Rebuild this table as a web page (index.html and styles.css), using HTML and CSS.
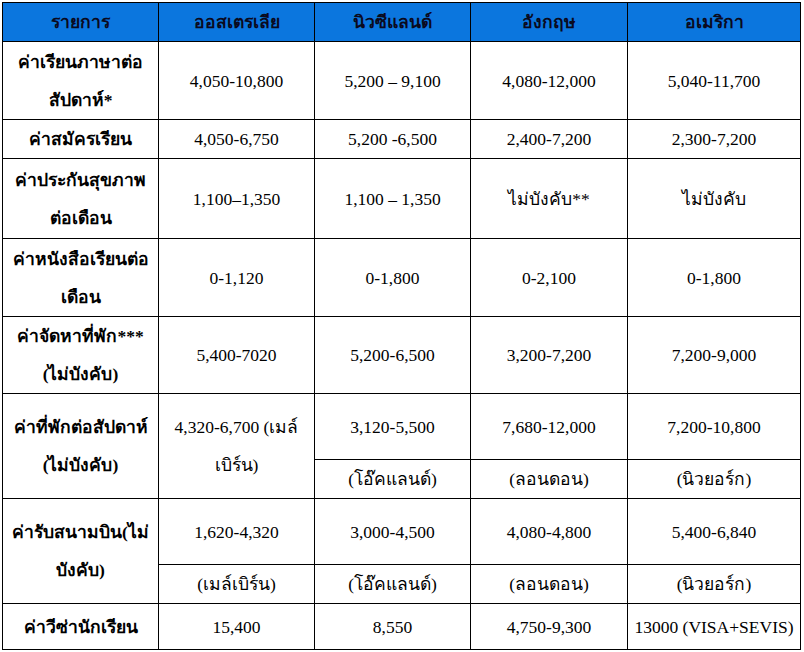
FILE: index.html
```html
<!DOCTYPE html>
<html lang="th">
<head>
<meta charset="utf-8">
<title>ค่าใช้จ่าย</title>
<link rel="stylesheet" href="styles.css">
</head>
<body>
<table class="costs">
  <colgroup>
    <col class="c1"><col class="c2"><col class="c3"><col class="c4"><col class="c5">
  </colgroup>
  <thead>
    <tr class="h-head">
      <th>รายการ</th>
      <th>ออสเตรเลีย</th>
      <th>นิวซีแลนด์</th>
      <th>อังกฤษ</th>
      <th>อเมริกา</th>
    </tr>
  </thead>
  <tbody>
    <tr class="h-78">
      <th>ค่าเรียนภาษาต่อ<br>สัปดาห์*</th>
      <td>4,050-10,800</td>
      <td>5,200 – 9,100</td>
      <td>4,080-12,000</td>
      <td>5,040-11,700</td>
    </tr>
    <tr class="h-38">
      <th>ค่าสมัครเรียน</th>
      <td>4,050-6,750</td>
      <td>5,200 -6,500</td>
      <td>2,400-7,200</td>
      <td>2,300-7,200</td>
    </tr>
    <tr class="h-80">
      <th>ค่าประกันสุขภาพ<br>ต่อเดือน</th>
      <td>1,100–1,350</td>
      <td>1,100 – 1,350</td>
      <td>ไม่บังคับ**</td>
      <td>ไม่บังคับ</td>
    </tr>
    <tr class="h-78">
      <th>ค่าหนังสือเรียนต่อ<br>เดือน</th>
      <td>0-1,120</td>
      <td>0-1,800</td>
      <td>0-2,100</td>
      <td>0-1,800</td>
    </tr>
    <tr class="h-77">
      <th>ค่าจัดหาที่พัก***<br>(ไม่บังคับ)</th>
      <td>5,400-7020</td>
      <td>5,200-6,500</td>
      <td>3,200-7,200</td>
      <td>7,200-9,000</td>
    </tr>
    <tr class="h-66">
      <th rowspan="2">ค่าที่พักต่อสัปดาห์<br>(ไม่บังคับ)</th>
      <td rowspan="2">4,320-6,700 (เมล์<br>เบิร์น)</td>
      <td>3,120-5,500</td>
      <td>7,680-12,000</td>
      <td>7,200-10,800</td>
    </tr>
    <tr class="h-39">
      <td>(โอ๊คแลนด์)</td>
      <td>(ลอนดอน)</td>
      <td>(นิวยอร์ก)</td>
    </tr>
    <tr class="h-66">
      <th rowspan="2">ค่ารับสนามบิน(ไม่<br>บังคับ)</th>
      <td>1,620-4,320</td>
      <td>3,000-4,500</td>
      <td>4,080-4,800</td>
      <td>5,400-6,840</td>
    </tr>
    <tr class="h-39">
      <td>(เมล์เบิร์น)</td>
      <td>(โอ๊คแลนด์)</td>
      <td>(ลอนดอน)</td>
      <td>(นิวยอร์ก)</td>
    </tr>
    <tr class="h-46">
      <th>ค่าวีซ่านักเรียน</th>
      <td>15,400</td>
      <td>8,550</td>
      <td>4,750-9,300</td>
      <td>13000 (VISA+SEVIS)</td>
    </tr>
  </tbody>
</table>
</body>
</html>
```

FILE: styles.css
```css
html, body {
  margin: 0;
  padding: 0;
  background: #ffffff;
}

body {
  padding: 2px 0 0 2px;
  font-family: "Liberation Serif", "Noto Sans", "DejaVu Sans", serif;
  color: #000;
}

.costs {
  border-collapse: collapse;
  table-layout: fixed;
  width: 799px;
  font-size: 17.5px;
}

.c1, .c2, .c3 { width: 156px; }
.c4 { width: 157px; }
.c5 { width: 173px; }

.costs th,
.costs td {
  border: 1px solid #000;
  padding: 0;
  text-align: center;
  vertical-align: middle;
  line-height: 38px;
  white-space: nowrap;
}

.costs th {
  font-weight: bold;
}

.costs td {
  font-weight: normal;
}

.costs thead th {
  background: #0b76de;
  color: #0a0a1e;
}

.h-head { height: 39px; }
.h-78 { height: 78px; }
.h-38 { height: 38px; }
.h-80 { height: 80px; }
.h-77 { height: 77px; }
.h-66 { height: 66px; }
.h-39 { height: 39px; }
.h-46 { height: 46px; }
```
